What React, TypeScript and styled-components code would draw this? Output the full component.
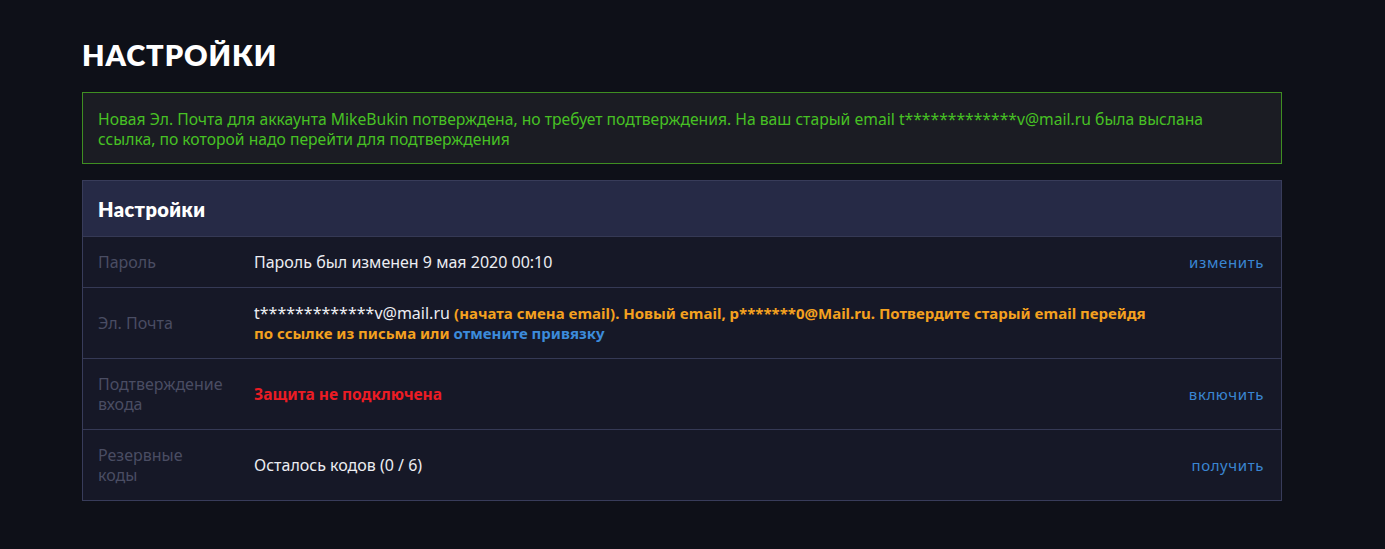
import type { ReactNode } from "react";
import styled, { createGlobalStyle } from "styled-components";

const GlobalStyle = createGlobalStyle`
  html, body {
    margin: 0;
    padding: 0;
    background-color: #0e1018;
  }

  body {
    font-family: "Noto Sans", "Lato", sans-serif;
    color: #e6e7ee;
  }
`;

type Row = {
  label: string;
  value: ReactNode;
  action?: string;
};

const getRows = (): Row[] => [
  {
    label: "Пароль",
    value: "Пароль был изменен 9 мая 2020 00:10",
    action: "изменить",
  },
  {
    label: "Эл. Почта",
    value: (
      <>
        t*************v@mail.ru{" "}
        <Warn>
          (начата смена email). Новый email, p*******0@Mail.ru. Потвердите
          старый email перейдя
          <br />
          по ссылке из письма или{" "}
        </Warn>
        <InlineLink href="#">отмените привязку</InlineLink>
      </>
    ),
  },
  {
    label: "Подтверждение входа",
    value: <Danger>Защита не подключена</Danger>,
    action: "включить",
  },
  {
    label: "Резервные коды",
    value: "Осталось кодов (0 / 6)",
    action: "получить",
  },
];

const App = () => {
  const rows = getRows();

  return (
    <>
      <GlobalStyle />
      <Page>
        <Heading>НАСТРОЙКИ</Heading>

        <Notice>
          Новая Эл. Почта для аккаунта MikeBukin потверждена, но требует
          подтверждения. На ваш старый email t*************v@mail.ru была
          выслана ссылка, по которой надо перейти для подтверждения
        </Notice>

        <Card>
          <CardHeader>Настройки</CardHeader>

          {rows.map((row, index) => (
            <SettingRow key={`setting-row-${index}`} tall={index > 0}>
              <Label>{row.label}</Label>
              <Value>{row.value}</Value>
              {row.action && <Action href="#">{row.action}</Action>}
            </SettingRow>
          ))}
        </Card>
      </Page>
    </>
  );
};

const Page = styled.div`
  width: 1200px;
  margin: 0 0 0 82px;
  padding: 38px 0 48px;
  box-sizing: border-box;
`;

const Heading = styled.h1`
  margin: 0 0 20px;

  font-family: "Lato", sans-serif;
  font-size: 29px;
  font-weight: 800;
  line-height: 34px;
  letter-spacing: 0.9px;
  color: #ffffff;
`;

const Notice = styled.div`
  padding: 16px 60px 14px 15px;

  font-size: 15.7px;
  line-height: 20px;
  color: #47c124;

  background-color: #1b1c23;
  border: 1px solid #3f8e22;
`;

const Card = styled.div`
  margin-top: 16px;

  background-color: #161827;
  border: 1px solid #383c5a;
`;

const CardHeader = styled.div`
  height: 55px;
  padding: 0 15px;

  display: flex;
  align-items: center;

  font-family: "Lato", sans-serif;
  font-size: 20px;
  font-weight: 800;
  letter-spacing: 0.4px;
  color: #ffffff;

  background-color: #262a46;
`;

const SettingRow = styled.div.withConfig({
  shouldForwardProp: (prop) => prop !== "tall",
})<{ tall?: boolean }>`
  min-height: ${(props) => (props.tall ? "71px" : "51px")};
  padding: 15px 17px 15px 15px;

  display: flex;
  align-items: center;

  font-size: 16px;
  line-height: 20px;

  border-top: 1px solid #353955;
  box-sizing: border-box;
`;

const Label = styled.div`
  width: 156px;
  flex-shrink: 0;
  padding-right: 30px;
  box-sizing: border-box;

  color: #4a4d63;
`;

const Value = styled.div`
  flex: 1;

  color: #ecedf2;
`;

const Warn = styled.span`
  font-size: 15px;
  font-weight: 700;
  color: #f4a11f;
`;

const Danger = styled.span`
  font-size: 15.5px;
  font-weight: 700;
  color: #ec1c24;
`;

const InlineLink = styled.a`
  font-size: 15px;
  font-weight: 700;
  color: #3c8bdb;
  text-decoration: none;
`;

const Action = styled.a`
  margin-left: auto;

  font-size: 15px;
  color: #3a86d2;
  text-decoration: none;
  letter-spacing: 0.6px;
`;

export default App;
